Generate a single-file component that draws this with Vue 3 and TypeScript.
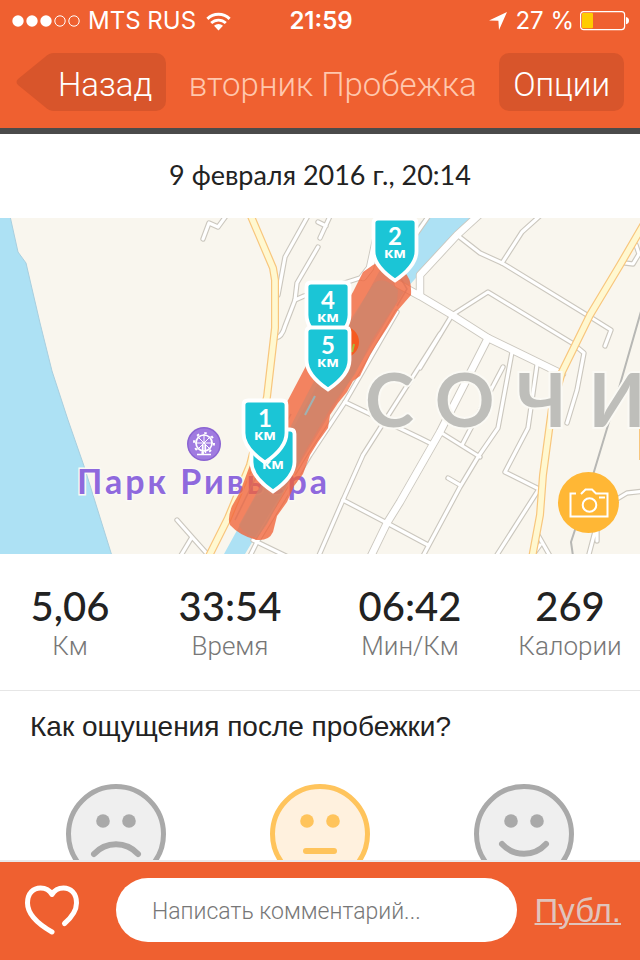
<script setup lang="ts">
import { ref } from 'vue'

interface Marker { id: number; label: string; x: number; y: number }
interface Stat { value: string; label: string }
interface Mood { id: string; label: string; mouth: string }

const markers: Marker[] = [
  { id: 2, label: '2', x: 395, y: 220 },
  { id: 4, label: '4', x: 328, y: 284 },
  { id: 5, label: '5', x: 328, y: 329 },
  { id: 3, label: '', x: 273, y: 431 },
  { id: 1, label: '1', x: 265, y: 402 },
]

const stats: Stat[] = [
  { value: '5,06', label: 'Км' },
  { value: '33:54', label: 'Время' },
  { value: '06:42', label: 'Мин/Км' },
  { value: '269', label: 'Калории' },
]

const moods: Mood[] = [
  { id: 'bad', label: 'Плохо', mouth: 'M28 70 C40 57 60 57 72 70' },
  { id: 'normal', label: 'Нормально', mouth: 'M36 67 H64' },
  { id: 'good', label: 'Хорошо', mouth: 'M28 60 C40 73 60 73 72 60' },
]

const minorRoads: string[] = [
  'M203 239 L209 223 L218 227 L226 216',
  'M309 214 L285 257 L278 295',
  'M331 214 L320 238 M326 226 L318 222',
  'M318 247 L297 283 L295 300 L285 326 Q282 337 276 338',
  'M295 300 L304 296 L363 277',
  'M397 312 L345 402 L310 455 L257 542 L248 560',
  'M345 402 L420 438 L430 443',
  'M440 334 L363 455 L343 500 L317 560',
  'M343 500 L387 523 L428 545',
  'M253 540 L286 556',
  'M177 520 L192 537 L209 556 M192 537 L180 557',
  'M457 235 L480 253 L502 263 L587 315 L611 330 L605 346',
  'M502 263 L522 232 L542 214',
  'M452 315 L488 292 L572 343 L584 353 L577 390 L567 423',
  'M452 315 L420 368',
  'M503 367 L462 445',
  'M512 352 L498 428 L478 457 L460 487 L423 556',
  'M440 432 L480 457',
  'M448 478 L460 485',
  'M537 365 L528 428 L505 472 L539 489 L495 558',
  'M636 245 L639 254 L633 264 L625 263',
  'M612 502 L627 493 L645 491',
  'M598 520 L588 558 M597 526 L597 541',
  'M538 535 L550 556 M540 545 L532 556',
  'M430 214 L412 240',
]
const wideRoads: string[] = [
  'M384 214 L376 240 L370 268 L363 277',
  'M480 214 L457 235 L420 275 L420 294',
  'M398 284 L420 296 L452 315 L488 338 L562 374',
  'M488 338 L440 432 L400 502 L387 523 L370 558',
]
const yellowRoads: string[] = [
  'M250 214 L273 268 L275 280 L275 328 L267 397 L250 465 L228 518 L208 558',
  'M645 222 L620 265 L590 315 L562 372 L552 408 L543 475 L540 515 L532 558',
]

const mood = ref<string>('normal')
const comment = ref<string>('')
const liked = ref<boolean>(false)
</script>

<template>
  <div class="screen">
    <header class="header">
      <div class="status">
        <div class="carrier">
          <svg class="signal" viewBox="0 0 68 12" aria-hidden="true">
            <circle v-for="n in 3" :key="n" :cx="n * 14 - 8" cy="6" r="5.7" fill="#fff" />
            <circle v-for="n in 2" :key="n + 3" :cx="n * 14 + 34" cy="6" r="5.2" fill="none" stroke="#fff" />
          </svg>
          <span>MTS RUS</span>
          <svg class="wifi" viewBox="0 0 25 19" aria-hidden="true">
            <path d="M1.4 6.8 A16 16 0 0 1 23.6 6.8" fill="none" stroke="#fff" stroke-width="3" />
            <path d="M5.2 11 A10.5 10.5 0 0 1 19.8 11" fill="none" stroke="#fff" stroke-width="2.8" />
            <path d="M8 13.7 A6.6 6.6 0 0 1 17 13.7 L12.5 18.4 Z" fill="#fff" />
          </svg>
        </div>
        <time class="clock">21:59</time>
        <div class="power">
          <svg class="arrow" viewBox="0 0 18 18" aria-hidden="true"><path d="M0 8.4 L18 0 L10 18 L9.4 8.7 Z" fill="#fff" /></svg>
          <span>27 %</span>
          <svg class="battery" viewBox="0 0 50 20" aria-hidden="true">
            <rect x=".6" y=".6" width="44" height="18" rx="3" fill="none" stroke="#fff" stroke-width="1.2" />
            <rect x="2" y="2" width="11" height="15.2" rx="1" fill="#ffcc00" />
            <path d="M46 6 Q49 6.5 49 9.6 Q49 12.7 46 13.2 Z" fill="#fff" />
          </svg>
        </div>
      </div>
      <nav class="bar">
        <button type="button" class="back">
          <svg class="back-tip" viewBox="0 0 38 58" preserveAspectRatio="none" aria-hidden="true">
            <path d="M38 0 Q33 0 29 4 L2 26 Q-1 29 2 32 L29 54 Q33 58 38 58 Z" fill="#d8552b" />
          </svg>
          <span class="back-label">Назад</span>
        </button>
        <h1 class="title">вторник Пробежка</h1>
        <button type="button" class="options">Опции</button>
      </nav>
    </header>

    <main class="content">
      <p class="date">9 февраля 2016 г., 20:14</p>

      <section class="map" aria-label="Карта">
        <svg class="map-art" viewBox="0 218 640 336" preserveAspectRatio="xMidYMid slice">
          <rect y="218" width="640" height="336" fill="#f9f6ee" />
          <path d="M-2 216 H10 L18 252 L26 263 L40 323 L52 371 L68 420 L84 466 L112 556 H-2 Z" fill="#ade1f4" stroke="#a9cfdf" />
          <path d="M428 214 L474 214 L405 290 L245 554 H224 L380 270 Z" fill="#ade1f4" />
          <g fill="none" stroke-linejoin="round">
            <path d="M642 308 L615 402 L593 475 L571 542 L573 556" stroke="#b7b7b4" stroke-width="2" />
            <g stroke="#cbc7be" stroke-linecap="round">
              <path v-for="d in minorRoads" :key="d" :d="d" stroke-width="5.4" />
              <path v-for="d in wideRoads" :key="d" :d="d" stroke-width="8.4" />
            </g>
            <g stroke="#fff" stroke-linecap="round">
              <path v-for="d in minorRoads" :key="d" :d="d" stroke-width="3.2" />
              <path v-for="d in wideRoads" :key="d" :d="d" stroke-width="6.6" />
            </g>
            <path v-for="d in yellowRoads" :key="d" :d="d" stroke="#f8c67d" stroke-width="8" />
            <path v-for="d in yellowRoads" :key="d + 'f'" :d="d" stroke="#fff8d0" stroke-width="5.6" />
            <path d="M640 428 V460" stroke="#f8c67d" stroke-width="2" />
          </g>

          <text class="city" x="365" y="427">СОЧИ</text>
          <text class="park" x="77" y="494">Парк Ривьера</text>

          <circle cx="204" cy="444" r="17" fill="#8a63d2" />
          <circle cx="204" cy="444" r="15.5" fill="#a07be0" />
          <g stroke="#fff" fill="none">
            <circle cx="204" cy="443" r="8" stroke-width="1.7" />
            <circle cx="204" cy="443" r="10" stroke-width="2" stroke-dasharray="2.5 5.354" />
            <path d="M204 434 V452 M195 443 H213 M197.6 436.6 L210.4 449.4 M210.4 436.6 L197.6 449.4" />
            <path d="M202.5 445 V453 M205.5 445 V453 M197 454.5 H211" stroke-width="1.4" />
          </g>

          <path d="M373 265 Q381 260 388 268 L404 272 Q412 278 411 295 L398 310 L387 328 L376 345 L370 355 L360 376 L353 381 L347 392 L338 403 L330 415 L328 428 L318 442 L310 455 L303 474 L294 486 L287 502 L277 516 L273 532 Q269 541 257 540 Q240 536 230 525 Q227 519 232 506 L240 492 L250 465 L287 402 L317 345 L340 313 L353 292 L363 272 Z" fill="#f16338" fill-opacity=".78" />
          <path d="M374 283 Q384 275 398 290 L397 302 L372 340 L355 374 L333 404 L303 455 L267 524 L257 538 Q245 536 239 525 L260 487 L300 408 L324 362 Z" fill="#cf866c" fill-opacity=".7" />
          <path d="M380 270 L400 277 L407 289 L397 306 M235 520 L252 485 L291 414" fill="none" stroke="#dc7358" stroke-width="1.5" opacity=".65" />
          <path d="M315 396 L305 415" stroke="#9fb2b3" stroke-width="2" />
          <circle cx="343" cy="342" r="16" fill="#f65a1f" />
          <path d="M352 352 L354 344" stroke="#a6bd3d" stroke-width="2" />

          <g v-for="m in markers" :key="m.id" :transform="`translate(${m.x} ${m.y})`">
            <path d="M-17 -1.5 H17 Q21.5 -1.5 21.5 3 V31 Q21.5 46 0 60.5 Q-21.5 46 -21.5 31 V3 Q-21.5 -1.5 -17 -1.5 Z" fill="#1bc5d6" stroke="#fff" stroke-width="3.8" />
            <text v-if="m.label" class="num" y="25">{{ m.label }}</text>
            <text class="unit" y="38">км</text>
          </g>
        </svg>
        <button type="button" class="camera" aria-label="Добавить фото">
          <svg viewBox="0 0 40 30" aria-hidden="true">
            <path d="M7 5.5 H1.5 V28.5 H38.5 V5.5 H27 L23 1.5 H16.5 L12 6" fill="none" stroke="#fff" stroke-width="2" />
            <circle cx="20.5" cy="17" r="6.8" fill="none" stroke="#fff" stroke-width="2" />
            <path d="M30 9.5 H36" stroke="#fff" stroke-width="2" />
          </svg>
        </button>
      </section>

      <dl class="stats">
        <div v-for="s in stats" :key="s.label" class="stat">
          <dd class="value">{{ s.value }}</dd>
          <dt class="caption">{{ s.label }}</dt>
        </div>
      </dl>

      <fieldset class="feeling">
        <legend class="question">Как ощущения после пробежки?</legend>
        <div class="moods">
          <label v-for="m in moods" :key="m.id" class="mood" :class="{ active: mood === m.id }">
            <input v-model="mood" class="mood-input" type="radio" name="mood" :value="m.id" :aria-label="m.label" />
            <svg class="face" viewBox="0 0 100 100" aria-hidden="true">
              <circle class="face-skin" cx="50" cy="50" r="47.5" />
              <circle class="face-eye" cx="37" cy="37" r="6.8" />
              <circle class="face-eye" cx="63" cy="37" r="6.8" />
              <path class="face-mouth" :d="m.mouth" />
            </svg>
          </label>
        </div>
      </fieldset>
    </main>

    <form class="composer" @submit.prevent>
      <button type="button" class="like" aria-label="Нравится" :aria-pressed="liked" @click="liked = !liked">
        <svg viewBox="0 0 56 52" aria-hidden="true">
          <path d="M28 48 C14 40 3.5 31 3.5 19 C3.5 9 9.5 4 16.5 4 C21.5 4 25.5 6 28 10.5 C30.5 6 34.5 4 39.5 4 C46.5 4 52.5 9 52.5 19 C52.5 26 48 33 40.5 39.5" fill="none" stroke="#fff" stroke-width="5" stroke-linecap="round" stroke-linejoin="round" />
        </svg>
      </button>
      <input v-model="comment" class="comment" type="text" placeholder="Написать комментарий..." aria-label="Комментарий" />
      <button type="submit" class="publish">Публ.</button>
    </form>
  </div>
</template>

<style>
body {
  margin: 0;
}
</style>

<style scoped>
.screen {
  display: flex;
  flex-direction: column;
  height: 100vh;
  overflow: hidden;
  background: #fff;
  color: #222;
  font-family: Inter, "Liberation Sans", sans-serif;
}
button {
  padding: 0;
  border: 0;
  background: none;
  color: inherit;
  font: inherit;
  cursor: pointer;
}
svg {
  display: block;
}
.header {
  flex: none;
  background: #ef6030;
  border-bottom: 6px solid #4b4b4b;
  color: #fff;
}
.status {
  display: grid;
  grid-template-columns: 1fr auto 1fr;
  align-items: center;
  padding: 0 10px 0 12px;
  font-size: 24px;
  line-height: 42px;
}
.carrier,
.power {
  display: flex;
  align-items: center;
  gap: 8px;
}
.power {
  justify-content: flex-end;
  gap: 6px;
}
.signal {
  width: 68px;
  height: 12px;
}
.wifi {
  width: 25px;
  height: 19px;
  margin-left: 2px;
}
.clock {
  font-weight: 600;
}
.arrow {
  width: 18px;
  height: 18px;
  margin-right: 2px;
}
.battery {
  width: 50px;
  height: 20px;
}
.bar {
  display: flex;
  align-items: center;
  justify-content: space-between;
  padding: 11px 16px 17px;
  font-family: Roboto, "Liberation Sans", sans-serif;
  font-weight: 300;
  font-size: 33px;
  line-height: 52px;
}
.back {
  display: flex;
}
.back-tip {
  width: 38px;
  height: 58px;
}
.back-label {
  padding: 6px 14px 0 4px;
  border-radius: 0 10px 10px 0;
  background: #d8552b;
}
.title {
  margin: 0;
  padding-top: 6px;
  font: inherit;
  color: #ffc7ad;
  white-space: nowrap;
}
.options {
  padding: 6px 14px 0;
  border-radius: 10px;
  background: #d8552b;
}
.content {
  flex: 1;
  min-height: 0;
  overflow: hidden;
}
.date {
  margin: 0;
  padding: 21px 0 23px;
  font-family: Lato, sans-serif;
  font-size: 27px;
  line-height: 40px;
  text-align: center;
}
.map {
  position: relative;
}
.map-art {
  width: 100%;
  height: auto;
}
.city {
  font: 700 74px Lato, sans-serif;
  letter-spacing: 22px;
  fill: #bebeba;
  stroke: #fbfaf5;
  stroke-width: 4px;
  paint-order: stroke;
}
.park {
  font: 700 34px Lato, sans-serif;
  letter-spacing: 3px;
  fill: #8f69dd;
  stroke: #fbf9f4;
  stroke-width: 3px;
  paint-order: stroke;
}
.num,
.unit {
  fill: #fff;
  text-anchor: middle;
  font-family: Lato, sans-serif;
  font-weight: 700;
}
.num {
  font-size: 24px;
}
.unit {
  font-family: "Open Sans", sans-serif;
  font-weight: 700;
  font-size: 15px;
}
.camera {
  position: absolute;
  right: 21px;
  bottom: 21px;
  display: grid;
  place-items: center;
  width: 61px;
  height: 61px;
  border-radius: 50%;
  background: #ffb735;
}
.camera svg {
  width: 40px;
  height: 30px;
}
.stats {
  display: grid;
  grid-template-columns: 7fr 9fr 9fr 7fr;
  margin: 0;
  padding: 28px 0;
  border-bottom: 1px solid #e6e6e6;
}
.stat {
  text-align: center;
}
.value {
  margin: 0;
  font-family: Lato, sans-serif;
  font-weight: 500;
  font-size: 40px;
  line-height: 48px;
}
.caption {
  font-family: Roboto, sans-serif;
  font-weight: 300;
  font-size: 26px;
  line-height: 32px;
  color: #777;
}
.feeling {
  margin: 0;
  padding: 0;
  border: 0;
}
.question {
  padding: 16px 30px 0;
  font-family: "Liberation Sans", sans-serif;
  font-size: 28px;
  line-height: 40px;
}
.moods {
  display: grid;
  grid-template-columns: repeat(3, 1fr);
  padding: 37px 14px;
}
.mood {
  display: grid;
  justify-items: center;
  color: #a9a9a9;
  cursor: pointer;
}
.mood-input {
  position: absolute;
  opacity: 0;
}
.face {
  width: 100px;
  height: 100px;
}
.face-skin {
  fill: #efefef;
  stroke: currentColor;
  stroke-width: 5px;
}
.face-eye {
  fill: currentColor;
}
.face-mouth {
  fill: none;
  stroke: currentColor;
  stroke-width: 6px;
  stroke-linecap: round;
}
.active {
  color: #ffc45c;
}
.active .face-skin {
  fill: #fff1de;
}
.composer {
  flex: none;
  display: flex;
  align-items: center;
  padding: 16px 19px 18px 24px;
  border-top: 2px solid #e9e9e9;
  background: #ef6030;
}
.like svg {
  width: 56px;
  height: 52px;
}
.comment {
  flex: 1;
  min-width: 0;
  height: 64px;
  margin: 0 18px 0 36px;
  padding: 2px 36px 0;
  box-sizing: border-box;
  border: 0;
  border-radius: 32px;
  background: #fff;
  color: #222;
  font-family: Roboto, sans-serif;
  font-weight: 300;
  font-size: 23px;
}
.comment::placeholder {
  color: #777;
  opacity: 1;
}
.publish {
  padding-top: 2px;
  color: #e0c4bc;
  font-family: "Liberation Sans", sans-serif;
  font-size: 33px;
  text-decoration: underline;
  text-decoration-thickness: 2px;
}
</style>
